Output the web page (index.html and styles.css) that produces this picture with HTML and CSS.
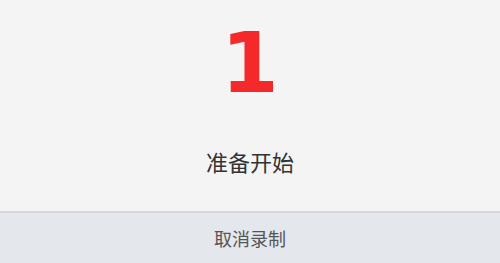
FILE: index.html
```html
<!DOCTYPE html>
<html lang="zh-CN">
<head>
    <meta charset="UTF-8">
    <title>录制</title>
    <link rel="stylesheet" href="styles.css">
</head>
<body>
<div id="panel">
    <div id="count">1</div>
    <div id="tip">准备开始</div>
</div>
<div id="bar">
    <button id="cancel">取消录制</button>
</div>
</body>
</html>
```
FILE: styles.css
```css
* {
    margin: 0;
    padding: 0;
}
html, body {
    width: 100%;
    height: 100%;
    background-color: #f4f4f4;
    font-family: "Noto Sans CJK SC", "Noto Sans", sans-serif;
}
#panel {
    height: 211px;
    display: flex;
    flex-direction: column;
    align-items: center;
}
#count {
    margin-top: 18px;
    height: 92px;
    line-height: 92px;
    font-family: "DejaVu Sans", sans-serif;
    font-weight: bold;
    font-size: 83px;
    color: #f5282a;
}
#tip {
    margin-top: 36px;
    font-size: 22px;
    line-height: 30px;
    color: #333;
}
#bar {
    height: 50px;
    border-top: 2px solid #d5d7db;
    background-color: #e4e7eb;
    display: flex;
    justify-content: center;
    align-items: center;
}
#cancel {
    border: 0;
    background: none;
    font-family: "Noto Sans CJK SC", sans-serif;
    font-size: 18px;
    color: #555;
    cursor: pointer;
}
```
